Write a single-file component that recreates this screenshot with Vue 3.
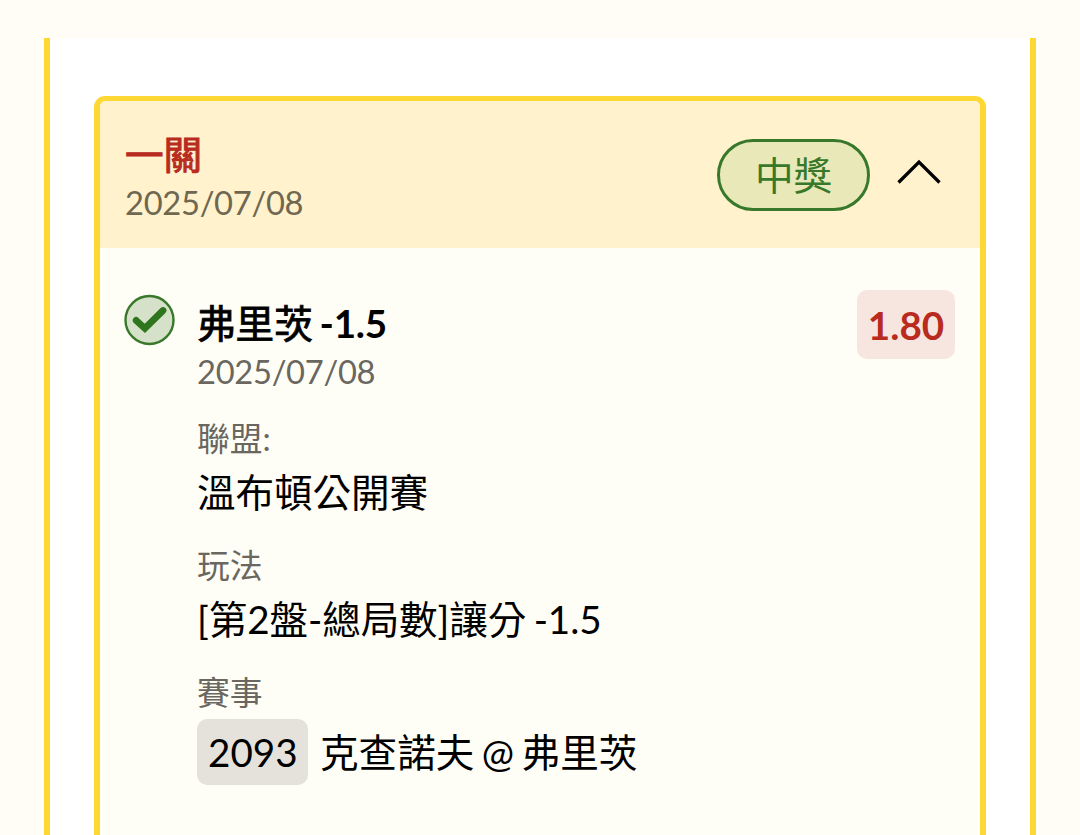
<template>
  <div class="page">
    <div class="panel">
      <div class="card">
        <div class="card_header">
          <div class="header_text">
            <div class="title">{{ bet.title }}</div>
            <div class="date">{{ bet.date }}</div>
          </div>
          <div class="status">{{ bet.status }}</div>
          <button class="toggle" @click="opened = !opened">
            <svg
              :class="{ closed: !opened }"
              width="44"
              height="26"
              viewBox="0 0 44 26"
            >
              <path d="M1.5 23.5L22 3L42.5 23.5" />
            </svg>
          </button>
        </div>
        <div v-if="opened" class="card_body">
          <svg class="check" width="52" height="52" viewBox="0 0 52 52">
            <circle cx="26.5" cy="26" r="24" />
            <path d="M13.2 26.4L21.9 34.4L40 16.5" />
          </svg>
          <div class="details">
            <div class="name">
              <span class="player">{{ bet.player }}</span> {{ bet.handicap }}
            </div>
            <div class="date">{{ bet.date }}</div>
            <div v-for="item in bet.items" :key="item.label" class="item">
              <div class="label">{{ item.label }}</div>
              <div class="value">{{ item.value }}</div>
            </div>
            <div class="item">
              <div class="label">賽事</div>
              <div class="match">
                <span class="code">{{ bet.code }}</span>
                <span>{{ bet.match }}</span>
              </div>
            </div>
          </div>
          <div class="odds">{{ bet.odds }}</div>
        </div>
      </div>
    </div>
  </div>
</template>
<script setup>
import { ref } from "vue";
const opened = ref(true);
const bet = ref({
  title: "一關",
  date: "2025/07/08",
  status: "中獎",
  player: "弗里茨",
  handicap: "-1.5",
  odds: "1.80",
  items: [
    { label: "聯盟:", value: "溫布頓公開賽" },
    { label: "玩法", value: "[第2盤-總局數]讓分 -1.5" },
  ],
  code: "2093",
  match: "克查諾夫 @ 弗里茨",
});
</script>
<style>
body {
  margin: 0;
  background-color: #fffdf5;
}
</style>
<style scoped>
.page {
  box-sizing: border-box;
  height: 835px;
  padding: 38px 44px 0;
  overflow: hidden;
  background-color: #fffdf5;
  color: #000;
  font-family: "Lato", "Noto Sans CJK TC", sans-serif;
  font-size: 38.6px;
  word-spacing: -2.4px;
}
.panel {
  box-sizing: border-box;
  height: 860px;
  padding: 58px 44px 0;
  border: solid #fdd835;
  border-width: 0 6px;
  background-color: #fff;
}
.card {
  box-sizing: border-box;
  height: 840px;
  border: 6px solid #fdd835;
  border-top-width: 5px;
  border-radius: 11px;
  background-color: #fffef6;
  overflow: hidden;
}
.card_header {
  box-sizing: border-box;
  display: flex;
  align-items: center;
  height: 147px;
  padding: 0 39px 0 25px;
  background-color: #fff2cc;
}
.header_text {
  flex: 1;
  padding-top: 3px;
}
.title {
  color: #b92b1e;
  font-weight: 400;
  line-height: 54px;
  -webkit-text-stroke: 1px #b92b1e;
}
.date {
  color: #696760;
  font-size: 32.7px;
  line-height: 44px;
  letter-spacing: -0.3px;
}
.card_header .date {
  color: #6f6750;
}
.status {
  box-sizing: border-box;
  width: 153px;
  height: 72px;
  border: 3px solid #37782a;
  border-radius: 36px;
  background-color: #e9e8b9;
  color: #37782a;
  line-height: 66px;
  text-align: center;
}
.toggle {
  display: flex;
  margin: 0 0 5px 27px;
  padding: 0;
  border: 0;
  background: none;
  cursor: pointer;
}
.toggle path {
  fill: none;
  stroke: #000;
  stroke-width: 3.3;
}
.closed {
  transform: rotate(180deg);
}
.card_body {
  display: flex;
  align-items: flex-start;
  padding: 42px 25px 0 23px;
}
.check {
  margin: 4px 22px 0 0;
}
.check circle {
  fill: #d5e1c9;
  stroke: #37782a;
  stroke-width: 2.4;
}
.check path {
  fill: none;
  stroke: #2f751d;
  stroke-width: 6.8;
  stroke-linecap: round;
}
.details {
  flex: 1;
}
.name {
  padding-top: 6px;
  font-weight: 700;
  line-height: 54px;
  letter-spacing: -0.2px;
}
.player {
  font-weight: 400;
  letter-spacing: 0;
  -webkit-text-stroke: 0.8px #000;
}
.item {
  padding-top: 21px;
}
.item + .item {
  padding-top: 22px;
}
.label {
  padding-bottom: 2px;
  color: #696760;
  font-size: 32.8px;
  line-height: 48px;
}
.value {
  line-height: 55px;
  letter-spacing: -0.1px;
}
.match {
  display: flex;
  align-items: center;
  gap: 12px;
  line-height: 66px;
}
.code {
  padding: 0 10.5px 0 11px;
  border-radius: 10px;
  background-color: #e5e2dc;
}
.odds {
  box-sizing: border-box;
  width: 98px;
  height: 69px;
  border-radius: 10px;
  background-color: #f7e6df;
  color: #b92b1e;
  font-weight: 700;
  line-height: 71px;
  text-align: center;
}
</style>
